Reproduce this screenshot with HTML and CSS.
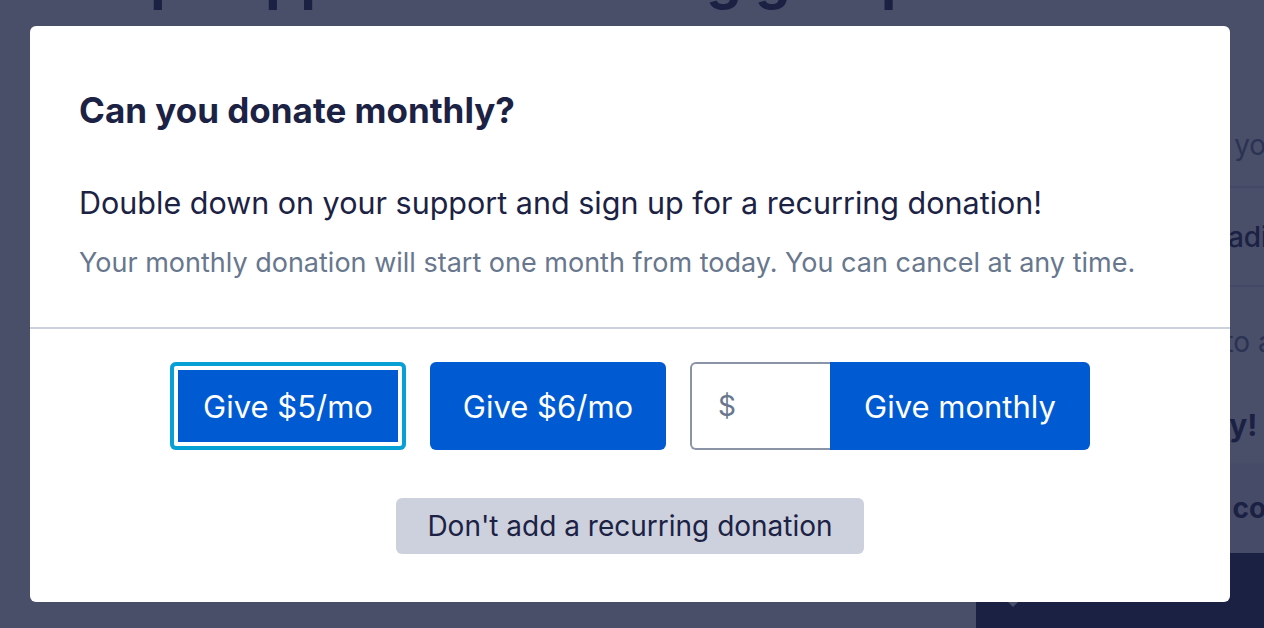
FILE: index.html
```html
<!DOCTYPE html>
<html lang="en">
<head>
  <meta charset="UTF-8">
  <meta name="viewport" content="width=device-width, initial-scale=1.0">
  <title>Monthly donation</title>
  <link rel="stylesheet" href="styles.css">
</head>
<body>
  <div class="page">
    <main class="page-main">
      <h1 class="page-title">Help support our reading group</h1>
    </main>
    <aside class="sidebar">
      <div class="side-row side-muted side-first">Thanks so much, you all</div>
      <div class="side-row side-strong side-reading">We are now reading</div>
      <div class="side-row side-muted side-open">Share this page to a friend</div>
      <div class="side-total">Give today!</div>
      <div class="side-band">Recurring donors co</div>
      <div class="side-cta"><span class="caret"></span></div>
    </aside>
  </div>

  <div class="overlay">
    <div class="modal" role="dialog" aria-labelledby="modalTitle">
      <div class="modal-body">
        <h2 class="modal-title" id="modalTitle">Can you donate monthly?</h2>
        <p class="modal-lead">Double down on your support and sign up for a recurring donation!</p>
        <p class="modal-note">Your monthly donation will start one month from today. You can cancel at any time.</p>
      </div>
      <div class="modal-actions">
        <div class="give-row">
          <button class="btn btn-primary is-focused">Give $5/mo</button>
          <button class="btn btn-primary">Give $6/mo</button>
          <div class="custom-amount">
            <label class="amount-field">$ <input type="text" aria-label="Custom amount"></label>
            <button class="btn btn-primary btn-attached">Give monthly</button>
          </div>
        </div>
        <button class="btn btn-secondary">Don't add a recurring donation</button>
      </div>
    </div>
  </div>
</body>
</html>
```

FILE: styles.css
```css
* { box-sizing: border-box; }
body { margin: 0; height: 628px; overflow: hidden; font-family: Inter, "Noto Sans", sans-serif; color: #1c2244; background: #fff; }

/* page behind the dialog */
.page { display: grid; grid-template-columns: 1fr 290px; height: 628px; }
.page-main { padding: 0 60px; }
.page-title { margin: -54px 0 0; font-size: 56px; line-height: 64px; font-weight: 700; white-space: nowrap; }
.sidebar { display: flex; flex-direction: column; padding-top: 89px; overflow: hidden; }
.side-row { height: 99px; padding-left: 24px; display: flex; align-items: center; font-size: 28px; white-space: nowrap; border-bottom: 2px solid #dfe2ea; }
.side-first { padding-top: 14px; }
.side-reading { padding-left: 60px; }
.side-muted { color: #68778d; }
.side-strong { font-weight: 500; }
.side-open { height: 110px; padding-left: 34px; border-bottom: 0; }
.side-total { height: 66px; padding: 10px 0 0 115px; font-size: 30px; font-weight: 700; white-space: nowrap; }
.side-band { height: 90px; padding-left: 12px; display: flex; align-items: center; background: #f1f2f6; font-size: 28px; font-weight: 700; white-space: nowrap; }
.side-cta { flex: 1; background: #1c2244; padding: 37px 0 0 30px; }
.caret { display: block; width: 14px; height: 14px; background: #fff; transform: rotate(45deg); }

/* dialog */
.overlay { position: fixed; inset: 0; background: rgba(28, 34, 68, 0.8); display: flex; justify-content: center; align-items: flex-start; padding: 26px 34px 0 30px; }
.modal { width: 1200px; background: #fff; border-radius: 6px; }
.modal-body { padding: 62px 49px 46px; border-bottom: 2px solid #cdd1de; }
.modal-title { margin: 0; font-size: 35px; line-height: 44px; font-weight: 700; }
.modal-lead { margin: 51px 0 0; font-size: 30.5px; line-height: 40px; }
.modal-note { margin: 22px 0 0; font-size: 27px; line-height: 36px; color: #68778d; }

.modal-actions { padding: 33px 48px 48px; display: flex; flex-direction: column; align-items: center; gap: 48px; }
.give-row { display: flex; gap: 24px; }
.btn { border: 0; border-radius: 6px; font: inherit; cursor: pointer; }
.btn-primary { width: 236px; height: 88px; background: #005bd3; color: #fff; font-size: 31px; }
.btn-primary.is-focused { box-shadow: inset 0 0 0 4px #07a0d4, inset 0 0 0 8px #fff; }
.custom-amount { display: flex; }
.amount-field { width: 140px; height: 88px; display: flex; align-items: center; padding-left: 26px; border: 2px solid #8a94a6; border-right: 0; border-radius: 6px 0 0 6px; font-size: 28px; color: #68778d; }
.amount-field input { width: 70px; border: 0; outline: 0; font: inherit; color: #1c2244; background: transparent; }
.btn-attached { width: 260px; border-radius: 0 6px 6px 0; }
.btn-secondary { width: 468px; height: 56px; background: #cdd1de; color: #1c2244; font-size: 28px; }
```
